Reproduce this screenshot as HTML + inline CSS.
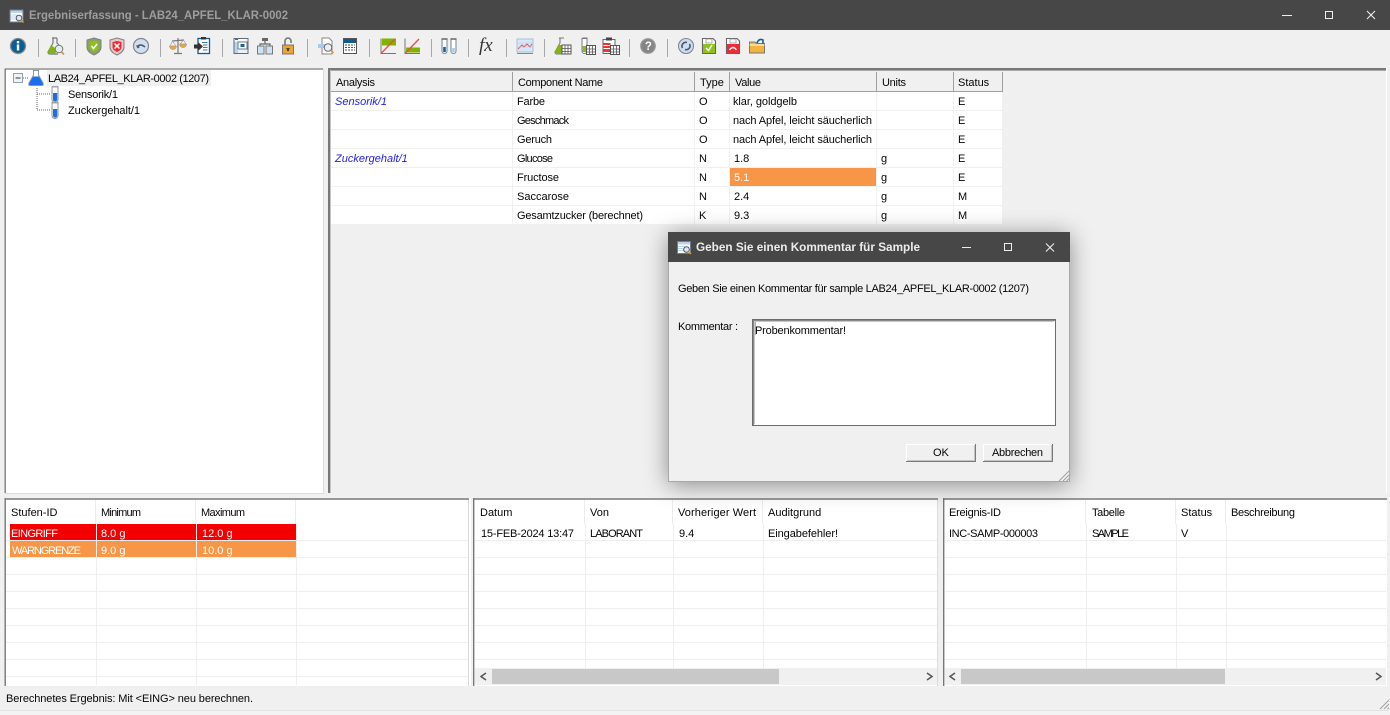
<!DOCTYPE html>
<html><head><meta charset="utf-8"><title>Ergebniserfassung</title>
<style>
html,body{margin:0;padding:0;width:1390px;height:715px;overflow:hidden;background:#f0f0f0}
svg{position:absolute;left:0;top:0}
text{font-family:"Liberation Sans",sans-serif;font-size:11px;fill:#050505;white-space:pre}
#dlg{position:absolute;left:668px;top:232px;width:402px;height:250px;background:#f0f0f0;box-shadow:0 3px 22px rgba(0,0,0,.42)}
</style></head><body>
<svg width="1390" height="715" viewBox="0 0 1390 715">
<defs>
<g id="gd"><rect x="0" y="0" width="9" height="9" fill="#fff" stroke="#555"/><path d="M0 3.5H9M0 6.5H9M3 0V9M6 0V9" stroke="#555" stroke-width=".8"/></g>
<g id="tube"><path d="M-3-7H3V5.500a3 3 0 0 1-6 0Z" fill="#fff" stroke="#8a96a2"/><path d="M-2-1H2.200V5.500a2.100 2.100 0 0 1-4.200 0Z" fill="#1f6fd6"/><rect x="-3.500" y="-8" width="7" height="1.500" fill="#a0a0a0"/></g>
<g id="win"><rect x="-6.500" y="-6" width="13" height="12" fill="#fff" stroke="#6c7f92"/><rect x="-6" y="-5.500" width="12" height="2.500" fill="#bcd3e8"/><path d="M-6-1H1M-6 1H0M-6 3H0" stroke="#bcd3e8"/><circle cx="2.500" cy="2" r="2.800" fill="#dbe8f2" stroke="#556"/><path d="M4.500 4L7 6.500" stroke="#e0962a" stroke-width="1.500"/></g>
</defs>
<rect width="1390" height="715" fill="#f0f0f0"/>
<rect width="1390" height="30" fill="#474747"/>
<use href="#win" transform="translate(16.500,16)"/>
<text x="29" y="19" textLength="259" lengthAdjust="spacingAndGlyphs" style="font-size:11.500px;font-weight:bold;fill:#9d9d9d">Ergebniserfassung - LAB24_APFEL_KLAR-0002</text>
<path d="M1282 15.500H1292" stroke="#eee"/><rect x="1325.500" y="11.500" width="7" height="7" fill="none" stroke="#eee" stroke-width="1"/><path d="M1367 11L1375 19M1375 11L1367 19" stroke="#eee" stroke-width="1.100"/>
<path d="M38.500 39V57M75.500 39V57M160.500 39V57M222.500 39V57M307.500 39V57M369.500 39V57M431.500 39V57M468.500 39V57M506.500 39V57M544.500 39V57M629.500 39V57M667.500 39V57" stroke="#a8a8a8"/>
<g transform="translate(18,46)"><circle r="7.500" fill="#0c5c96" stroke="#8a8a8a" stroke-width="1.300"/><rect x="-1.200" y="-1.500" width="2.400" height="6" fill="#fff"/><rect x="-1.200" y="-5" width="2.400" height="2.400" fill="#fff"/></g>
<g transform="translate(55,46)"><path d="M-3-8H2M-2-8V-3L-7 6Q-7 8-5 8H3M2-8V-3L4-1" fill="none" stroke="#777" stroke-width="1.200"/><path d="M-4-1L-7 6Q-7 8-5 8H1L0 2Z" fill="#82b414"/><circle cx="4" cy="3" r="3.800" fill="#e4edf3" stroke="#777"/><path d="M6.500 6L9 8.500" stroke="#e2952c" stroke-width="1.600"/></g>
<g transform="translate(94,46)"><path d="M0-8L7-6V1Q7 6 0 9Q-7 6-7 1V-6Z" fill="#8da068" stroke="#808080"/><path d="M0-5L4.500-4V1Q4.500 4 0 6Q-4.500 4-4.500 1V-4Z" fill="#8cc21a"/><path d="M-2.500 0L-.5 2.500L3-2" fill="none" stroke="#fff" stroke-width="1.500"/></g>
<g transform="translate(117,46)"><path d="M0-8L7-6V1Q7 6 0 9Q-7 6-7 1V-6Z" fill="#e8c8c8" stroke="#808080"/><path d="M0-5L4.500-4V1Q4.500 4 0 6Q-4.500 4-4.500 1V-4Z" fill="#ee2a35"/><path d="M-2.500-2.500L2.500 2.500M2.500-2.500L-2.500 2.500" stroke="#fff" stroke-width="1.500"/></g>
<g transform="translate(141,46)"><circle r="7.500" fill="#cfe0f2" stroke="#858585" stroke-width="1.200"/><path d="M-4 1Q-1-3 4 1" fill="none" stroke="#4a5563" stroke-width="1.600"/><path d="M-5-1L-3.500 2.500L-1 1Z" fill="#4a5563"/></g>
<g transform="translate(178,46)"><path d="M0-8V7M-4 7.500H4M-6-5L6-6" stroke="#777" stroke-width="1.200"/><path d="M-8.500 0H-1.500Q-2 3.500-5 3.500Q-8 3.500-8.500 0Z" fill="#eda63e" stroke="#888" stroke-width=".5"/><path d="M1.500-2H8.500Q8 1.500 5 1.500Q2 1.500 1.500-2Z" fill="#eda63e" stroke="#888" stroke-width=".5"/><path d="M-8 0L-5.500-5L-2 0M2-2L5.500-6L8-2" fill="none" stroke="#999" stroke-width=".6"/></g>
<g transform="translate(203,46)"><rect x="-5" y="-7.500" width="11.500" height="15" fill="#fff" stroke="#155a8f" stroke-width="1.300"/><rect x="-2" y="-9" width="5" height="2.500" fill="#333"/><path d="M-1-3.500H4.500M0-1H4.500M0 1.500H4.500M0 4H4.500" stroke="#3a7aad"/><path d="M-9-1.500H-5V-4L0 0.500L-5 5V2.500H-9Z" fill="#333"/></g>
<g transform="translate(241,46)"><rect x="-7" y="-7.500" width="14" height="15" fill="#eaf1f8" stroke="#5c6c7c"/><rect x="-6.500" y="-7" width="13" height="1.500" fill="#fff"/><rect x="-6" y="-7" width="3" height="1" fill="#c33"/><rect x="-6.500" y="-4" width="3.500" height="11" fill="#b8d4ee"/><rect x="-3" y="-4" width="9" height="7" fill="#fff" stroke="#6c7c8a"/><rect x="-.5" y="-2" width="4" height="3" fill="#19609c"/></g>
<g transform="translate(265,46)"><rect x="-3" y="-8" width="6" height="3" fill="#666"/><path d="M0-5V-2M-5 0V-2H5V0" fill="none" stroke="#666" stroke-width="1.200"/><rect x="-7.500" y="0" width="6.500" height="8" fill="#cfe2f4" stroke="#777"/><rect x="1" y="0" width="6.500" height="8" fill="#cfe2f4" stroke="#777"/></g>
<g transform="translate(288,46)"><path d="M-3-1V-5A3 3 0 0 1 3-5V-3" fill="none" stroke="#777" stroke-width="1.600"/><rect x="-5.500" y="-1" width="11" height="9" fill="#eea52e" stroke="#777"/><path d="M-2 2H2L1 3.500V5H-1V3.500Z" fill="#444"/></g>
<g transform="translate(326,46)"><path d="M-4-8H3L6-5V8H-4Z" fill="#fff" stroke="#888"/><rect x="-8" y="-2" width="8" height="4" fill="#a7cbec"/><circle cx="2" cy="1.500" r="3.800" fill="#e8f0f6" stroke="#666"/><path d="M5 4.500L7.500 7" stroke="#e2952c" stroke-width="1.600"/></g>
<g transform="translate(350,46)"><rect x="-6.500" y="-7.500" width="13" height="15" fill="#fff" stroke="#555"/><rect x="-6" y="-7" width="12" height="4" fill="#155a8f"/><path d="M-5-1H5M-5 1.500H5M-5 4H5" stroke="#456" stroke-dasharray="2 1"/></g>
<g transform="translate(388,46)"><path d="M-7-7.500V7.500H8" fill="none" stroke="#777"/><rect x="-6" y="-7.500" width="14" height="7" fill="#80b400"/><path d="M-6.500 7L7-7" stroke="#ee4b4b" stroke-width="1.300"/></g>
<g transform="translate(412,46)"><path d="M-7-7.500V7.500H8" fill="none" stroke="#777"/><rect x="-6" y="1.500" width="14" height="5" fill="#80b400"/><path d="M-6.500 7L7-7" stroke="#ee4b4b" stroke-width="1.300"/></g>
<g transform="translate(449,46)"><path d="M-7-7V5A2.500 2.500 0 0 0-2 5V-7M2-7V5A2.500 2.500 0 0 0 7 5V-7" fill="#fff" stroke="#8895a2" stroke-width="1.200"/><rect x="-5.800" y="1" width="2.600" height="5" fill="#15609c"/><rect x="3.200" y="2" width="2.600" height="4" fill="#a6cbea"/><path d="M-7.500-7H-1.500M1.500-7H7.500" stroke="#666" stroke-width="1.400"/></g>
<text x="479" y="51" style="font-family:'Liberation Serif',serif;font-style:italic;font-size:19px;fill:#333">fx</text>
<g transform="translate(525,46)"><rect x="-8" y="-7" width="16" height="13" fill="#d6e7f6" stroke="#a5c0da"/><path d="M-8 7.500H8" stroke="#888"/><path d="M-7 3L-3-1L-1 1L2-2L5 1L7-2" fill="none" stroke="#e25a5a"/><path d="M-8-3H8M-8 1H8" stroke="#bcd" stroke-width=".5"/></g>
<g transform="translate(562,46)"><path d="M-3-8H2M-2-8V-3L-7 6Q-7 8-5 8H0" fill="#fff" stroke="#777" stroke-width="1.100"/><path d="M-4-1L-7 6Q-7 8-5 8H1V-1Z" fill="#82b414"/><use href="#gd" x="0" y="-1"/></g>
<g transform="translate(587,46)"><path d="M-5-8V5A2.500 2.500 0 0 0 0 5V-8" fill="#fff" stroke="#778"/><rect x="-4.500" y="-8.500" width="5" height="1.500" fill="#777"/><rect x="-4.300" y="0" width="3.600" height="6" fill="#8cbc24"/><use href="#gd" x="-.5" y="-.5"/></g>
<g transform="translate(611,46)"><rect x="-8" y="-6.500" width="12" height="14" fill="#fff" stroke="#666"/><rect x="-5" y="-8.500" width="6" height="3" fill="#444"/><rect x="-7.500" y="-3" width="7" height="2" fill="#e33"/><rect x="-7.500" y="0" width="7" height="2" fill="#e33"/><rect x="-7.500" y="3" width="7" height="3" fill="#e33"/><use href="#gd" x="-.5" y="-.5"/></g>
<g transform="translate(648,46)"><circle r="7.300" fill="#858585" stroke="#999" stroke-width="1.200"/><text x="-3.200" y="4" style="font-size:11.500px;font-weight:bold;fill:#fff">?</text></g>
<g transform="translate(686,46)"><circle r="7.500" fill="#c9def4" stroke="#888" stroke-width="1.100"/><path d="M-3.500 2A3.800 3.800 0 0 1 1-3.500M3.500-2A3.800 3.800 0 0 1-1 3.500" fill="none" stroke="#556" stroke-width="1.600"/></g>
<g transform="translate(709,46)"><path d="M-6.500-7.500H4L6.500-5V7.500H-6.500Z" fill="#fff" stroke="#666" stroke-width="1.100"/><rect x="-3" y="-7" width="6" height="4" fill="#fff" stroke="#888" stroke-width=".7"/><rect x="-6" y="-2" width="12" height="9" fill="#8cc21a"/><path d="M-3 2L-.5 4.500L3-1" fill="none" stroke="#fff" stroke-width="1.500"/></g>
<g transform="translate(733,46)"><path d="M-6.500-7.500H4L6.500-5V7.500H-6.500Z" fill="#fff" stroke="#666" stroke-width="1.100"/><rect x="-3" y="-7" width="6" height="4" fill="#fff" stroke="#888" stroke-width=".7"/><rect x="-6" y="-2" width="12" height="9" fill="#ec2a38"/><path d="M-3.500 4Q0-1 3.500 4" fill="none" stroke="#fff" stroke-width="1.400"/></g>
<g transform="translate(757,46)"><path d="M-7.500-4H-2L-.5-2.500H7.500V7H-7.500Z" fill="#f3b33f" stroke="#777"/><path d="M-7.500-1H7.500" stroke="#fff"/><path d="M0-3Q2-8 6-6L6-2" fill="none" stroke="#15609c" stroke-width="1.600"/></g>

<rect x="5" y="68" width="318" height="425" fill="#fff"/>
<path d="M5 69H323M5.200 68.500V493" stroke="#777" stroke-width="1.300"/>
<path d="M323.500 69V493M5 493.500H324" stroke="#dcdcdc"/>
<rect x="47" y="70" width="164" height="16" fill="#f0f0f0"/>
<rect x="13.500" y="73.500" width="9" height="9" fill="#eef3f8" stroke="#8aa0b4"/><path d="M15.500 78H20.500" stroke="#333"/>
<path d="M23 78H29M37 88V110M37 94H50M37 110H50" stroke="#666" stroke-dasharray="1 1" fill="none"/>
<g transform="translate(36,78)"><path d="M-2.500-7.500H2.500V-3L7 5Q8 7.500 6 7.500H-6Q-8 7.500-7 5L-2.500-3Z" fill="#1a6ef0" stroke="#8a96a2"/><path d="M-2-7H2V-3L2.800-1.500H-2.800L-2-3Z" fill="#fff"/></g>
<use href="#tube" transform="translate(55,94)"/><use href="#tube" transform="translate(55,110)"/>
<text x="48" y="82" textLength="161" lengthAdjust="spacing">LAB24_APFEL_KLAR-0002 (1207)</text>
<text x="68" y="98" textLength="50" lengthAdjust="spacing">Sensorik/1</text>
<text x="68" y="114" textLength="72" lengthAdjust="spacing">Zuckergehalt/1</text>

<rect x="329" y="70" width="1058" height="423" fill="#f0f0f0"/>
<path d="M328 69H1386" stroke="#787878" stroke-width="2"/><path d="M328 70.500H1386" stroke="#a8a8a8"/>
<path d="M329 69V493" stroke="#787878" stroke-width="2"/><path d="M330.500 70V493" stroke="#c4c4c4"/>
<path d="M1386.500 68V493" stroke="#fff"/>
<rect x="331" y="92" width="671" height="132" fill="#fff"/>
<path d="M331 91.500H1003" stroke="#a0a0a0"/>
<path d="M512.500 72V91M694.500 72V91M729.500 72V91M876.500 72V91M953.500 72V91M1002.500 72V91" stroke="#a0a0a0"/>
<path d="M331 110.500H1002M331 129.500H1002M331 148.500H1002M331 167.500H1002M331 186.500H1002M331 205.500H1002M512.500 92V224M694.500 92V224M729.500 92V224M876.500 92V224M953.500 92V224" stroke="#f0f0f0"/>
<rect x="730" y="168" width="146" height="18" fill="#f79646"/>
<g>
<text x="336" y="86" textLength="39" lengthAdjust="spacing">Analysis</text><text x="518" y="86" textLength="85" lengthAdjust="spacing">Component Name</text><text x="700" y="86">Type</text><text x="735" y="86" textLength="26" lengthAdjust="spacing">Value</text><text x="882" y="86" textLength="24" lengthAdjust="spacing">Units</text><text x="958" y="86">Status</text>
<text x="335" y="105" style="fill:#1e1ef0;font-style:italic">Sensorik/1</text><text x="517" y="105" textLength="28" lengthAdjust="spacing">Farbe</text><text x="699" y="105">O</text><text x="733" y="105" textLength="64" lengthAdjust="spacing">klar, goldgelb</text><text x="958" y="105">E</text>
<text x="517" y="124" textLength="52" lengthAdjust="spacing">Geschmack</text><text x="699" y="124">O</text><text x="733" y="124" textLength="139" lengthAdjust="spacing">nach Apfel, leicht säucherlich</text><text x="958" y="124">E</text>
<text x="517" y="143" textLength="35" lengthAdjust="spacing">Geruch</text><text x="699" y="143">O</text><text x="733" y="143" textLength="139" lengthAdjust="spacing">nach Apfel, leicht säucherlich</text><text x="958" y="143">E</text>
<text x="335" y="162" style="fill:#1e1ef0;font-style:italic">Zuckergehalt/1</text><text x="517" y="162" textLength="36" lengthAdjust="spacing">Glucose</text><text x="699" y="162">N</text><text x="734" y="162">1.8</text><text x="881" y="162">g</text><text x="958" y="162">E</text>
<text x="517" y="181" textLength="42" lengthAdjust="spacing">Fructose</text><text x="699" y="181">N</text><text x="734" y="181" style="fill:#fff">5.1</text><text x="881" y="181">g</text><text x="958" y="181">E</text>
<text x="517" y="200" textLength="52" lengthAdjust="spacing">Saccarose</text><text x="699" y="200">N</text><text x="734" y="200">2.4</text><text x="881" y="200">g</text><text x="958" y="200">M</text>
<text x="517" y="219" textLength="126" lengthAdjust="spacing">Gesamtzucker (berechnet)</text><text x="699" y="219">K</text><text x="734" y="219">9.3</text><text x="881" y="219">g</text><text x="958" y="219">M</text>
</g>

<rect x="5" y="498" width="466" height="188" fill="#fff"/>
<rect x="473" y="498" width="465" height="188" fill="#fff"/>
<rect x="943" y="498" width="444" height="188" fill="#fff"/>
<path d="M5 499H469M5.200 498V686M473 499H938M473.700 498V686M943 499H1387M943.700 498V686" stroke="#777" stroke-width="1.400"/>
<path d="M468.500 500V686M937.500 500V686" stroke="#dcdcdc"/>
<path d="M95.500 500V524M195.500 500V524M295.500 500V524M584.500 500V524M672.500 500V524M762.500 500V524M1085.500 500V524M1175.500 500V524M1225.500 500V524" stroke="#ececec"/>
<path d="M6 540.500H468M6 557.500H468M6 574.500H468M6 591.500H468M6 608.500H468M6 625.500H468M6 642.500H468M6 659.500H468M6 676.500H468M96.500 524V685M196.500 524V685M296.500 524V685" stroke="#efefef"/>
<path d="M475 540.500H937M475 557.500H937M475 574.500H937M475 591.500H937M475 608.500H937M475 625.500H937M475 642.500H937M475 659.500H937M585.500 524V668M673.500 524V668M763.500 524V668" stroke="#efefef"/>
<path d="M945 540.500H1386M945 557.500H1386M945 574.500H1386M945 591.500H1386M945 608.500H1386M945 625.500H1386M945 642.500H1386M945 659.500H1386M1086.500 524V668M1176.500 524V668M1226.500 524V668" stroke="#efefef"/>
<rect x="10" y="524" width="86" height="16" fill="#f40000"/><rect x="97" y="524" width="99" height="16" fill="#f40000"/><rect x="197" y="524" width="99" height="16" fill="#f40000"/>
<rect x="10" y="541" width="86" height="16" fill="#f79646"/><rect x="97" y="541" width="99" height="16" fill="#f79646"/><rect x="197" y="541" width="99" height="16" fill="#f79646"/>
<rect x="475" y="668" width="462" height="17" fill="#f0f0f0"/><rect x="492" y="669" width="287" height="15" fill="#c8c8c8"/>
<rect x="945" y="668" width="441" height="17" fill="#f0f0f0"/><rect x="961" y="669" width="264" height="15" fill="#c8c8c8"/>
<path d="M486 673L481 676.500L486 680M927 673L932 676.500L927 680M955 673L950 676.500L955 680M1376 673L1381 676.500L1376 680" fill="none" stroke="#555" stroke-width="1.500"/>
<text x="11" y="516">Stufen-ID</text><text x="101" y="516" textLength="40" lengthAdjust="spacing">Minimum</text><text x="201" y="516" textLength="44" lengthAdjust="spacing">Maximum</text>
<text x="11" y="537" style="fill:#fff" textLength="47" lengthAdjust="spacing">EINGRIFF</text><text x="101" y="537" style="fill:#fff">8.0 g</text><text x="202" y="537" style="fill:#fff">12.0 g</text>
<text x="12" y="554" style="fill:#fff" textLength="69" lengthAdjust="spacing">WARNGRENZE</text><text x="101" y="554" style="fill:#fff">9.0 g</text><text x="202" y="554" style="fill:#fff">10.0 g</text>
<text x="480" y="516">Datum</text><text x="590" y="516">Von</text><text x="678" y="516" textLength="78" lengthAdjust="spacing">Vorheriger Wert</text><text x="768" y="516">Auditgrund</text>
<text x="481" y="537" textLength="93" lengthAdjust="spacing">15-FEB-2024 13:47</text><text x="590" y="537" textLength="53" lengthAdjust="spacing">LABORANT</text><text x="679" y="537">9.4</text><text x="768" y="537" textLength="70" lengthAdjust="spacing">Eingabefehler!</text>
<text x="949" y="516" textLength="52" lengthAdjust="spacing">Ereignis-ID</text><text x="1092" y="516" textLength="33" lengthAdjust="spacing">Tabelle</text><text x="1181" y="516">Status</text><text x="1231" y="516" textLength="64" lengthAdjust="spacing">Beschreibung</text>
<text x="949" y="537" textLength="89" lengthAdjust="spacing">INC-SAMP-000003</text><text x="1092" y="537" textLength="37" lengthAdjust="spacing">SAMPLE</text><text x="1181" y="537">V</text>
<path d="M0 710.500H1390" stroke="#e2e2e2"/>
<rect x="0" y="711" width="1390" height="4" fill="#f3f3f3"/>
<text x="6" y="702" textLength="247" lengthAdjust="spacing">Berechnetes Ergebnis: Mit &lt;EING&gt; neu berechnen.</text>
<path d="M1380 709L1389 700M1384 709L1389 704M1387.500 709L1389 707.500" stroke="#a0a0a0"/>
</svg>
<div id="dlg"></div>
<svg width="1390" height="715" viewBox="0 0 1390 715">
<rect x="668.500" y="232.500" width="401" height="249" fill="none" stroke="#a8a8a8"/>
<rect x="668" y="232" width="402" height="30" fill="#474747"/>
<use href="#win" transform="translate(684,247.500)"/>
<text x="696" y="251" textLength="224" lengthAdjust="spacingAndGlyphs" style="font-size:11.500px;font-weight:bold;fill:#ececec">Geben Sie einen Kommentar für Sample</text>
<path d="M962 247.500H971" stroke="#eee"/><rect x="1004.500" y="243.500" width="7" height="7" fill="none" stroke="#eee"/><path d="M1046 243.500L1054 251.500M1054 243.500L1046 251.500" stroke="#eee" stroke-width="1.100"/>
<text x="678" y="292" textLength="351" lengthAdjust="spacing">Geben Sie einen Kommentar für sample LAB24_APFEL_KLAR-0002 (1207)</text>
<text x="678" y="330" textLength="60" lengthAdjust="spacing">Kommentar :</text>
<rect x="752.500" y="319.500" width="303" height="106" fill="#fff" stroke="#6c6c6c"/>
<path d="M753.500 425V320.500H1055" fill="none" stroke="#8a8a8a"/><path d="M754.500 424V321.500H1054" fill="none" stroke="#c8c8c8"/>
<path d="M755.500 322V335" stroke="#c9b84a"/>
<text x="755" y="334" textLength="91" lengthAdjust="spacing">Probenkommentar!</text>
<rect x="906" y="444" width="70" height="18" fill="#f0f0f0"/>
<path d="M906.500 461V444.500H975" fill="none" stroke="#fff"/><path d="M906 461.500H975.500V444" fill="none" stroke="#7a7a7a"/><path d="M907 460.500H974.500V445" fill="none" stroke="#c4c4c4"/>
<text x="933" y="456">OK</text>
<rect x="983" y="444" width="70" height="18" fill="#f0f0f0"/>
<path d="M983.500 461V444.500H1052" fill="none" stroke="#fff"/><path d="M983 461.500H1052.500V444" fill="none" stroke="#7a7a7a"/><path d="M984 460.500H1051.500V445" fill="none" stroke="#c4c4c4"/>
<text x="992" y="456" textLength="51" lengthAdjust="spacing">Abbrechen</text>
<path d="M1059 481L1069 471M1063 481L1069 475M1066.500 481L1069 478.500" stroke="#a0a0a0"/>
</svg>
</body></html>
